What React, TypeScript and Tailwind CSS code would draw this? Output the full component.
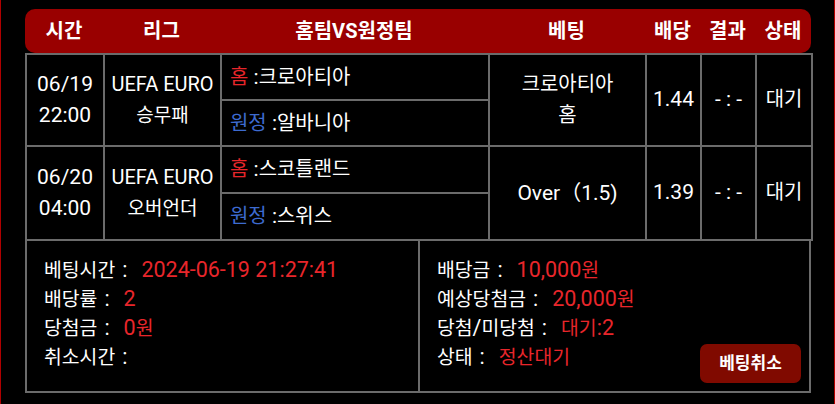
import React from "react";

const font = { fontFamily: '"Roboto", "Noto Sans CJK KR", sans-serif' };

// Renders Hangul runs slightly smaller than the Latin/digit runs, as in the reference.
function T({ s, k }: { s: string; k: string }) {
  const parts = s.split(/([\uAC00-\uD7A3]+)/);
  return (
    <>
      {parts.map((p, i) =>
        /[\uAC00-\uD7A3]/.test(p) ? (
          <span key={i} className={k}>
            {p}
          </span>
        ) : (
          <React.Fragment key={i}>{p}</React.Fragment>
        )
      )}
    </>
  );
}

type Match = {
  date: string;
  time: string;
  league: string;
  type: string;
  home: string;
  away: string;
  bet: string[];
  odds: string;
};

const matches: Match[] = [
  {
    date: "06/19",
    time: "22:00",
    league: "UEFA EURO",
    type: "승무패",
    home: "크로아티아",
    away: "알바니아",
    bet: ["크로아티아", "홈"],
    odds: "1.44",
  },
  {
    date: "06/20",
    time: "04:00",
    league: "UEFA EURO",
    type: "오버언더",
    home: "스코틀랜드",
    away: "스위스",
    bet: ["Over（1.5)"],
    odds: "1.39",
  },
];

const cell = "border-2 border-[#6b6b6b] text-center align-middle";
const TK = "text-[0.95em]";
const BK = "text-[0.9em]";

function Line({ label, value }: { label: string; value?: string }) {
  return (
    <div className="flex h-[29px] items-center whitespace-nowrap">
      <T s={label} k={BK} />
      <span className="ml-[7px]">:</span>
      {value !== undefined && (
        <span className="ml-[14px] text-[#e8262b]">
          <T s={value} k={BK} />
        </span>
      )}
    </div>
  );
}

export default function App() {
  return (
    <div
      className="w-[835px] h-[404px] bg-black border-x border-[#b00000] text-white text-[21px] overflow-hidden"
      style={font}
    >
      <div className="pl-[24px] pt-[9px] w-[810px]">
        <div className="flex h-[44px] w-[786px] items-center rounded-[10px] bg-[#990000] font-bold text-[20px]">
          <div className="w-[78px] text-center">시간</div>
          <div className="w-[117px] text-center">리그</div>
          <div className="w-[268px] text-center">홈팀VS원정팀</div>
          <div className="w-[157px] text-center">베팅</div>
          <div className="w-[55px] text-center">배당</div>
          <div className="w-[55px] text-center">결과</div>
          <div className="w-[56px] text-center">상태</div>
        </div>
        <table className="w-[786px] table-fixed border-collapse">
          <colgroup>
            <col className="w-[78px]" />
            <col className="w-[117px]" />
            <col className="w-[268px]" />
            <col className="w-[157px]" />
            <col className="w-[55px]" />
            <col className="w-[55px]" />
            <col className="w-[56px]" />
          </colgroup>
          <tbody>
            {matches.map((m, i) => (
              <React.Fragment key={i}>
                <tr className={i === 0 ? "h-[46px]" : "h-[47px]"}>
                  <td rowSpan={2} className={`${cell} leading-[31px]`}>
                    <div>{m.date}</div>
                    <div>{m.time}</div>
                  </td>
                  <td rowSpan={2} className={`${cell} leading-[31px] text-[20px]`}>
                    <div>{m.league}</div>
                    <div>
                      <T s={m.type} k={TK} />
                    </div>
                  </td>
                  <td className="border-2 border-[#6b6b6b] pl-[8px] text-left align-middle leading-[31px]">
                    <span className={`text-[#e8262b] ${TK}`}>홈</span> :<T s={m.home} k={TK} />
                  </td>
                  <td rowSpan={2} className={`${cell} leading-[31px]`}>
                    {m.bet.map((b, j) => (
                      <div key={j}>
                        <T s={b} k={TK} />
                      </div>
                    ))}
                  </td>
                  <td rowSpan={2} className={cell}>
                    {m.odds}
                  </td>
                  <td rowSpan={2} className={cell}>
                    - : -
                  </td>
                  <td rowSpan={2} className={cell}>
                    <T s="대기" k={TK} />
                  </td>
                </tr>
                <tr className={i === 0 ? "h-[46px]" : "h-[47px]"}>
                  <td className="border-2 border-[#6b6b6b] pl-[8px] text-left align-middle leading-[31px]">
                    <span className={`text-[#3d6bd0] ${TK}`}>원정</span> :<T s={m.away} k={TK} />
                  </td>
                </tr>
              </React.Fragment>
            ))}
          </tbody>
        </table>
        <div className="grid w-[786px] grid-cols-[393px_1fr] h-[152px] border-2 border-t-0 border-[#6b6b6b] text-[21.5px]">
          <div className="border-r-2 border-[#6b6b6b] pl-[17px] pt-[15px]">
            <Line label="베팅시간" value="2024-06-19 21:27:41" />
            <Line label="배당률" value="2" />
            <Line label="당첨금" value="0원" />
            <Line label="취소시간" />
          </div>
          <div className="flex items-end justify-between pl-[17px] pr-[8px] pb-[8px]">
            <div className="self-start pt-[15px]">
              <Line label="배당금" value="10,000원" />
              <Line label="예상당첨금" value="20,000원" />
              <Line label="당첨/미당첨" value="대기:2" />
              <Line label="상태" value="정산대기" />
            </div>
            <button className="h-[39px] w-[101px] rounded-[7px] bg-[#800a00] text-[17px] font-bold text-white">
              베팅취소
            </button>
          </div>
        </div>
      </div>
    </div>
  );
}
